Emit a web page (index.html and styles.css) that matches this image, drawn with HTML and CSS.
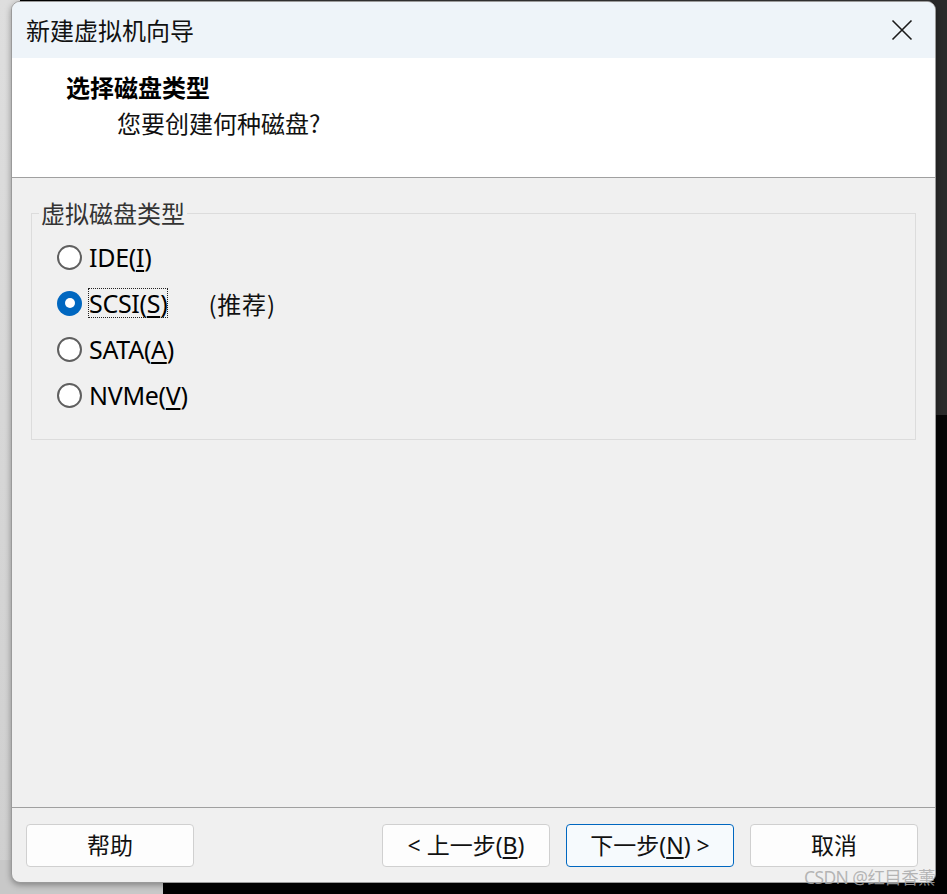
FILE: index.html
```html
<!DOCTYPE html>
<html lang="zh-CN">
<head>
<meta charset="utf-8">
<title>新建虚拟机向导</title>
<link rel="stylesheet" href="styles.css">
</head>
<body>
<div class="desktop">
  <div class="bg bg-left"></div>
  <div class="bg bg-top"></div>
  <div class="bg bg-right-top"></div>
  <div class="bg bg-right-bottom"></div>
  <div class="bg bg-bottom-left"></div>
  <div class="bg bg-bottom-right"></div>

  <div class="window">
    <div class="titlebar">
      <span class="title">新建虚拟机向导</span>
      <span class="close" aria-label="关闭">
        <svg width="22" height="22" viewBox="0 0 22 22"><path d="M1.5 1.5 L20.5 20.5 M20.5 1.5 L1.5 20.5" stroke="#1a1a1a" stroke-width="1.6" fill="none"/></svg>
      </span>
    </div>
    <div class="header">
      <div class="h-title">选择磁盘类型</div>
      <div class="h-sub">您要创建何种磁盘?</div>
    </div>
    <div class="content">
      <fieldset class="group">
        <legend class="legend">虚拟磁盘类型</legend>
        <div class="radio-row">
          <span class="radio"></span>
          <span class="label">IDE(<u>I</u>)</span>
        </div>
        <div class="radio-row">
          <span class="radio checked"></span>
          <span class="label focus">SCSI(<u>S</u>)</span>
          <span class="note">(推荐)</span>
        </div>
        <div class="radio-row">
          <span class="radio"></span>
          <span class="label">SATA(<u>A</u>)</span>
        </div>
        <div class="radio-row">
          <span class="radio"></span>
          <span class="label">NVMe(<u>V</u>)</span>
        </div>
      </fieldset>
    </div>
    <div class="footer">
      <button class="btn">帮助</button>
      <div class="spacer"></div>
      <button class="btn">&lt; 上一步(<u>B</u>)</button>
      <button class="btn primary">下一步(<u>N</u>) &gt;</button>
      <button class="btn">取消</button>
    </div>
  </div>

  <div class="watermark">CSDN @红目香薰</div>
</div>
</body>
</html>
```
FILE: styles.css
```css
* { box-sizing: border-box; }
html, body { margin: 0; padding: 0; }
body {
  width: 947px;
  height: 894px;
  overflow: hidden;
  background: #000;
  font-family: "Noto Sans", "Noto Sans CJK SC", sans-serif;
}
.desktop { position: relative; width: 947px; height: 894px; }
.bg { position: absolute; }
.bg-left { left: 0; top: 0; width: 20px; height: 894px; background: linear-gradient(to bottom, #dedede, #cfcfcf); }
.bg-top { left: 90px; top: 0; width: 857px; height: 12px; background: #333; }
.bg-right-top { left: 930px; top: 0; width: 17px; height: 415px; background: #2a2a2a; }
.bg-right-bottom { left: 930px; top: 415px; width: 17px; height: 479px; background: #050505; }
.bg-bottom-left { left: 0; top: 860px; width: 163px; height: 34px; background: #c8c8c8; }
.bg-bottom-right { left: 163px; top: 870px; width: 784px; height: 24px; background: #000; }

.window {
  position: absolute;
  left: 11px;
  top: 1px;
  width: 925px;
  height: 882px;
  background: #f0f0f0;
  border: 1px solid #9a9a9a;
  border-radius: 9px;
  overflow: hidden;
  display: flex;
  flex-direction: column;
  box-shadow: 0 2px 6px rgba(0,0,0,0.35);
}
.titlebar {
  height: 56px;
  flex: none;
  background: #eef4f9;
  display: flex;
  align-items: center;
  justify-content: space-between;
  padding: 0 22px 0 14px;
}
.title {
  font-family: "Noto Sans CJK SC", sans-serif;
  font-size: 24px;
  color: #111;
  line-height: 1;
}
.close { display: flex; width: 22px; height: 22px; }

.header {
  height: 120px;
  flex: none;
  background: #fff;
  border-bottom: 1px solid #a0a0a0;
  padding: 14px 0 0 54px;
}
.h-title {
  font-family: "Noto Sans CJK SC", sans-serif;
  font-weight: 700;
  font-size: 24px;
  line-height: 30px;
  color: #000;
}
.h-sub {
  font-family: "Noto Sans CJK SC", sans-serif;
  font-size: 24px;
  line-height: 30px;
  color: #111;
  margin-top: 6px;
  padding-left: 51px;
}

.content {
  flex: 1;
  padding: 23px 19px 0 19px;
}
.group {
  margin: 0;
  border: 1px solid #dcdcdc;
  padding: 9px 0 14px 25px;
  height: 239px;
  display: flex;
  flex-direction: column;
}
.legend {
  font-family: "Noto Sans CJK SC", sans-serif;
  font-size: 24px;
  line-height: 24px;
  color: #333;
  padding: 0 2px;
  margin-left: -18px;
}
.radio-row {
  height: 46px;
  flex: none;
  display: flex;
  align-items: center;
}
.radio {
  width: 25px;
  height: 25px;
  border-radius: 50%;
  border: 2px solid #5f5f5f;
  background: #fff;
  flex: none;
  margin-right: 6px;
  position: relative;
}
.radio.checked {
  border: none;
  background: #0067c0;
}
.radio.checked::after {
  content: "";
  position: absolute;
  left: 7.5px; top: 7.5px;
  width: 10px; height: 10px;
  border-radius: 50%;
  background: #fff;
}
.label {
  font-size: 25px;
  line-height: 28px;
  color: #000;
  padding: 0;
  border: 1px solid transparent;
  letter-spacing: -0.3px;
}
.label u { text-underline-offset: 3px; text-decoration-thickness: 1.5px; }
.label.focus { border: 1px dotted #222; }
.note {
  font-family: "Noto Sans CJK SC", "Noto Sans", sans-serif;
  font-size: 24px;
  color: #111;
  margin-left: 40px;
  letter-spacing: 0.8px;
}

.footer {
  height: 75px;
  flex: none;
  border-top: 1px solid #a0a0a0;
  display: flex;
  align-items: flex-start;
  padding: 16px 17px 0 14px;
  gap: 16px;
}
.spacer { flex: 1; }
.btn {
  width: 168px;
  height: 43px;
  background: #fdfdfd;
  border: 1px solid #d0d0d0;
  border-radius: 4px;
  font-family: "Noto Sans", "Noto Sans CJK SC", sans-serif;
  font-size: 23px;
  color: #111;
  padding: 0;
  line-height: 1;
}
.btn u { text-underline-offset: 3px; }
.btn.primary { border-color: #0067c0; background: #f6fafd; }

.watermark {
  position: absolute;
  right: 12px;
  top: 864px;
  font-family: "Noto Sans", "Noto Sans CJK SC", sans-serif;
  font-size: 17.5px;
  color: rgba(170,170,170,0.85);
  letter-spacing: -0.6px;
}
```
